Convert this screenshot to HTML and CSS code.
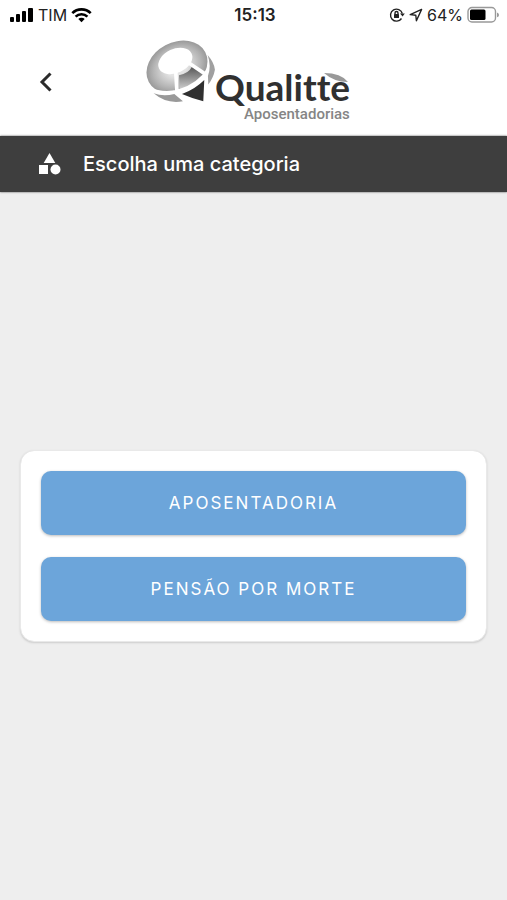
FILE: index.html
```html
<!DOCTYPE html>
<html lang="pt-BR">
<head>
<meta charset="utf-8">
<meta name="viewport" content="width=device-width, initial-scale=1">
<title>Qualitte Aposentadorias</title>
<link rel="stylesheet" href="styles.css">
</head>
<body>
<div class="status">
  <div class="status-side">
    <svg width="24" height="16" viewBox="0 0 24 16" aria-hidden="true"><rect x="0" y="10" width="4" height="5" rx="1"/><rect x="6" y="7" width="4" height="8" rx="1"/><rect x="12" y="4" width="4" height="11" rx="1"/><rect x="18" y="1" width="5" height="14" rx="1"/></svg>
    <span class="carrier">TIM</span>
    <svg width="21" height="16" viewBox="0 0 21 16" fill="none" stroke="#000" stroke-width="2.6" aria-hidden="true"><path d="M1.3 6.2a13 13 0 0 1 18.4 0M4.6 9.6a8.4 8.4 0 0 1 11.8 0"/><path d="M10.500 15.200l-3.200-3.200a4.600 4.600 0 0 1 6.400 0z" fill="#000" stroke="none"/></svg>
  </div>
  <time class="clock">15:13</time>
  <div class="status-side status-end">
    <svg width="16" height="16" viewBox="0 0 16 16" fill="none" stroke="#222" stroke-width="1.400" aria-hidden="true"><path d="M13.300 6.500a6 6 0 1 0-.8 5"/><path d="M11 6.500h4.800l-2.200 3z" fill="#222" stroke="none"/><rect x="5" y="7" width="5" height="4" rx=".6" fill="#222" stroke="none"/><path d="M6 7.300V6a1.500 1.500 0 0 1 3 0v1.300"/></svg>
    <svg width="14" height="14" viewBox="0 0 14 14" fill="none" stroke="#222" stroke-width="1.400" stroke-linejoin="round" aria-hidden="true"><path d="M12.600 1.400L1.200 6.600l5.600.6.600 5.600z"/></svg>
    <span class="percent">64%</span>
    <svg width="33" height="18" viewBox="0 0 33 18" aria-hidden="true"><rect x="1" y="1.500" width="27.500" height="14.500" rx="4" fill="#fff" stroke="#999" stroke-width="1.400"/><rect x="3" y="3.500" width="15.500" height="10.500" rx="1.500"/><path d="M30 6.500q2 .6 2 2.400t-2 2.400z" fill="#999"/></svg>
  </div>
</div>
<header class="header">
  <button class="back" type="button" aria-label="Voltar"><svg width="16" height="24" viewBox="0 0 16 24" fill="none" stroke="#2b2b2b" stroke-width="3" aria-hidden="true"><path d="M12.500 3.500L4 12l8.500 8.500"/></svg></button>
  <svg class="logo" width="206" height="86" viewBox="0 0 206 86" role="img" aria-label="Qualitte Aposentadorias">
    <defs>
      <radialGradient id="disc" cx=".5" cy=".5" r=".56"><stop offset=".3" stop-color="#e4e4e4"/><stop offset=".7" stop-color="#b4b4b4"/><stop offset="1" stop-color="#8a8a8a"/></radialGradient>
      <linearGradient id="wedge" x1="0" y1="0" x2="0" y2="1"><stop offset="0" stop-color="#555"/><stop offset="1" stop-color="#d2d2d2"/></linearGradient>
    </defs>
    <g transform="scale(.333) translate(-30 -30)">
      <ellipse cx="123" cy="111" rx="96" ry="74" transform="rotate(-28 123 111)" fill="url(#disc)"/>
      <path d="M129 136Q158 130 168 110L204 134Q175 162 131 180Z" fill="url(#wedge)"/>
      <ellipse cx="118" cy="93" rx="54" ry="36" transform="rotate(-25 118 93)" fill="#fff"/>
      <path d="M119 120L123 186M160 100L215 137M38 177Q82 196 128 184Q190 165 220 116" fill="none" stroke="#fff" stroke-width="11"/>
      <path d="M53 190Q82 200 115 192L141 214Q91 223 53 190Z" fill="#999"/>
      <path d="M138 192Q177 178 205 150L202 214Q173 207 138 192Z" fill="#303030"/>
      <path d="M215 75Q235 98 237 119Q233 142 217 164L216 138Q227 108 215 75Z" fill="#a0a0a0"/>
    </g>
    <text class="brand" x="69" y="61">Qualitte</text>
    <path d="M178 33Q195 33 202 42Q188 42 178 33Z" fill="#999"/>
    <text class="tagline" x="98" y="79">Aposentadorias</text>
  </svg>
</header>
<div class="titlebar">
  <svg width="22" height="24" viewBox="0 0 22 24" fill="#fff" aria-hidden="true"><path d="M10.500 1l5.800 10H4.700z"/><rect x="0" y="13" width="9" height="9"/><circle cx="16.500" cy="17.500" r="5"/></svg>
  <h1 class="title">Escolha uma categoria</h1>
</div>
<main class="content">
  <div class="card">
    <button class="option" type="button">Aposentadoria</button>
    <button class="option" type="button">Pensão por morte</button>
  </div>
</main>
</body>
</html>
```
FILE: styles.css
```css
* {
  box-sizing: border-box;
}

body {
  margin: 0;
  min-height: 100vh;
  display: flex;
  flex-direction: column;
  background: #eee;
  color: #222;
  font-family: Inter, "Liberation Sans", sans-serif;
}

.status {
  display: flex;
  align-items: center;
  height: 30px;
  padding: 0 7px 0 10px;
  background: #fff;
  font-size: 16px;
}

.status-side {
  flex: 1;
  display: flex;
  align-items: center;
  gap: 4px;
}

.status-end {
  justify-content: flex-end;
}

.clock {
  font-size: 17px;
  font-weight: 600;
}

.header {
  display: grid;
  grid-template-columns: 1fr auto 1fr;
  align-items: start;
  height: 106px;
  padding-top: 10px;
  background: #fff;
}

.back {
  justify-self: start;
  display: flex;
  margin: 26px 0 0 32px;
  padding: 4px 6px;
  border: 0;
  background: none;
}

.logo {
  margin-right: 10px;
  overflow: visible;
}

.brand {
  font: 700 37px Lato, sans-serif;
  font-variant-ligatures: none;
  fill: #303030;
}

.tagline {
  font: 500 15px Roboto, sans-serif;
  fill: #858585;
}

.titlebar {
  display: flex;
  align-items: center;
  gap: 22px;
  height: 56px;
  padding: 0 39px;
  background: #3e3e3e;
  box-shadow: 0 0 2px #555;
}

.title {
  margin: 0;
  color: #fff;
  font-size: 20px;
  font-weight: 500;
}

.content {
  flex: 1;
  display: flex;
  align-items: center;
  padding: 20px;
}

.card {
  flex: 1;
  display: flex;
  flex-direction: column;
  gap: 22px;
  padding: 20px;
  border: 1px solid #e9e9e9;
  border-radius: 14px;
  background: #fff;
  background-clip: padding-box;
  box-shadow: 0 1px 2px #ccc;
}

.option {
  height: 64px;
  border: 0;
  border-radius: 10px;
  background: #6ca5da;
  box-shadow: 0 1px 3px #bbb;
  color: #fff;
  font-family: inherit;
  font-size: 17px;
  letter-spacing: 2px;
  text-transform: uppercase;
}
```
